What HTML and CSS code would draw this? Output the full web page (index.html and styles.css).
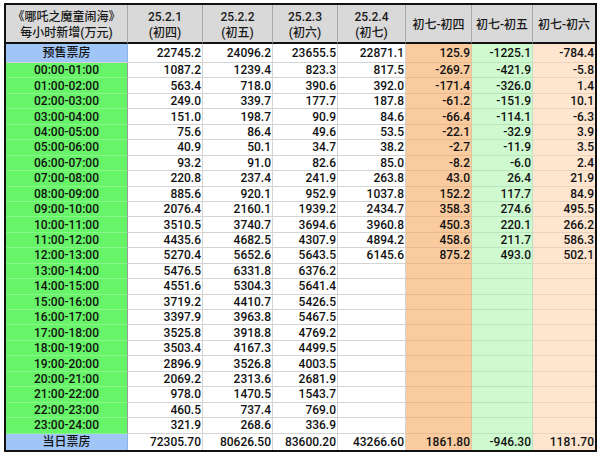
FILE: index.html
```html
<!DOCTYPE html>
<html lang="zh-CN">
<head>
<meta charset="utf-8">
<title>哪吒之魔童闹海 每小时新增</title>
<link rel="stylesheet" href="styles.css">
</head>
<body>
<div class="wrap">
<table class="sheet">
<colgroup>
<col class="c1"><col class="c2"><col class="c3"><col class="c4"><col class="c5"><col class="c6"><col class="c7"><col class="c8">
</colgroup>
<thead>
<tr class="head">
<th>《哪吒之魔童闹海》<br>每小时新增(万元)</th>
<th>25.2.1<br>(初四)</th>
<th>25.2.2<br>(初五)</th>
<th>25.2.3<br>(初六)</th>
<th>25.2.4<br>(初七)</th>
<th>初七-初四</th>
<th>初七-初五</th>
<th>初七-初六</th>
</tr>
</thead>
<tbody>
<tr class="pre"><td class="lbl blue">预售票房</td><td>22745.2</td><td>24096.2</td><td>23655.5</td><td>22871.1</td><td class="d1">125.9</td><td class="d2">-1225.1</td><td class="d3">-784.4</td></tr>
<tr class="hr"><td class="lbl green">00:00-01:00</td><td>1087.2</td><td>1239.4</td><td>823.3</td><td>817.5</td><td class="d1">-269.7</td><td class="d2">-421.9</td><td class="d3">-5.8</td></tr>
<tr class="hr"><td class="lbl green">01:00-02:00</td><td>563.4</td><td>718.0</td><td>390.6</td><td>392.0</td><td class="d1">-171.4</td><td class="d2">-326.0</td><td class="d3">1.4</td></tr>
<tr class="hr"><td class="lbl green">02:00-03:00</td><td>249.0</td><td>339.7</td><td>177.7</td><td>187.8</td><td class="d1">-61.2</td><td class="d2">-151.9</td><td class="d3">10.1</td></tr>
<tr class="hr"><td class="lbl green">03:00-04:00</td><td>151.0</td><td>198.7</td><td>90.9</td><td>84.6</td><td class="d1">-66.4</td><td class="d2">-114.1</td><td class="d3">-6.3</td></tr>
<tr class="hr"><td class="lbl green">04:00-05:00</td><td>75.6</td><td>86.4</td><td>49.6</td><td>53.5</td><td class="d1">-22.1</td><td class="d2">-32.9</td><td class="d3">3.9</td></tr>
<tr class="hr"><td class="lbl green">05:00-06:00</td><td>40.9</td><td>50.1</td><td>34.7</td><td>38.2</td><td class="d1">-2.7</td><td class="d2">-11.9</td><td class="d3">3.5</td></tr>
<tr class="hr"><td class="lbl green">06:00-07:00</td><td>93.2</td><td>91.0</td><td>82.6</td><td>85.0</td><td class="d1">-8.2</td><td class="d2">-6.0</td><td class="d3">2.4</td></tr>
<tr class="hr"><td class="lbl green">07:00-08:00</td><td>220.8</td><td>237.4</td><td>241.9</td><td>263.8</td><td class="d1">43.0</td><td class="d2">26.4</td><td class="d3">21.9</td></tr>
<tr class="hr"><td class="lbl green">08:00-09:00</td><td>885.6</td><td>920.1</td><td>952.9</td><td>1037.8</td><td class="d1">152.2</td><td class="d2">117.7</td><td class="d3">84.9</td></tr>
<tr class="hr"><td class="lbl green">09:00-10:00</td><td>2076.4</td><td>2160.1</td><td>1939.2</td><td>2434.7</td><td class="d1">358.3</td><td class="d2">274.6</td><td class="d3">495.5</td></tr>
<tr class="hr"><td class="lbl green">10:00-11:00</td><td>3510.5</td><td>3740.7</td><td>3694.6</td><td>3960.8</td><td class="d1">450.3</td><td class="d2">220.1</td><td class="d3">266.2</td></tr>
<tr class="hr"><td class="lbl green">11:00-12:00</td><td>4435.6</td><td>4682.5</td><td>4307.9</td><td>4894.2</td><td class="d1">458.6</td><td class="d2">211.7</td><td class="d3">586.3</td></tr>
<tr class="hr"><td class="lbl green">12:00-13:00</td><td>5270.4</td><td>5652.6</td><td>5643.5</td><td>6145.6</td><td class="d1">875.2</td><td class="d2">493.0</td><td class="d3">502.1</td></tr>
<tr class="hr"><td class="lbl green">13:00-14:00</td><td>5476.5</td><td>6331.8</td><td>6376.2</td><td></td><td class="d1"></td><td class="d2"></td><td class="d3"></td></tr>
<tr class="hr"><td class="lbl green">14:00-15:00</td><td>4551.6</td><td>5304.3</td><td>5641.4</td><td></td><td class="d1"></td><td class="d2"></td><td class="d3"></td></tr>
<tr class="hr"><td class="lbl green">15:00-16:00</td><td>3719.2</td><td>4410.7</td><td>5426.5</td><td></td><td class="d1"></td><td class="d2"></td><td class="d3"></td></tr>
<tr class="hr"><td class="lbl green">16:00-17:00</td><td>3397.9</td><td>3963.8</td><td>5467.5</td><td></td><td class="d1"></td><td class="d2"></td><td class="d3"></td></tr>
<tr class="hr"><td class="lbl green">17:00-18:00</td><td>3525.8</td><td>3918.8</td><td>4769.2</td><td></td><td class="d1"></td><td class="d2"></td><td class="d3"></td></tr>
<tr class="hr"><td class="lbl green">18:00-19:00</td><td>3503.4</td><td>4167.3</td><td>4499.5</td><td></td><td class="d1"></td><td class="d2"></td><td class="d3"></td></tr>
<tr class="hr"><td class="lbl green">19:00-20:00</td><td>2896.9</td><td>3526.8</td><td>4003.5</td><td></td><td class="d1"></td><td class="d2"></td><td class="d3"></td></tr>
<tr class="hr"><td class="lbl green">20:00-21:00</td><td>2069.2</td><td>2313.6</td><td>2681.9</td><td></td><td class="d1"></td><td class="d2"></td><td class="d3"></td></tr>
<tr class="hr"><td class="lbl green">21:00-22:00</td><td>978.0</td><td>1470.5</td><td>1543.7</td><td></td><td class="d1"></td><td class="d2"></td><td class="d3"></td></tr>
<tr class="hr"><td class="lbl green">22:00-23:00</td><td>460.5</td><td>737.4</td><td>769.0</td><td></td><td class="d1"></td><td class="d2"></td><td class="d3"></td></tr>
<tr class="hr"><td class="lbl green">23:00-24:00</td><td>321.9</td><td>268.6</td><td>336.9</td><td></td><td class="d1"></td><td class="d2"></td><td class="d3"></td></tr>
<tr class="total"><td class="lbl blue">当日票房</td><td>72305.70</td><td>80626.50</td><td>83600.20</td><td>43266.60</td><td class="d1">1861.80</td><td class="d2">-946.30</td><td class="d3">1181.70</td></tr>
</tbody>
</table>
</div>
</body>
</html>
```
FILE: styles.css
```css
html, body {
  margin: 0;
  padding: 0;
  background: #ffffff;
}
.wrap {
  padding: 3px 0 0 4px;
}
.sheet {
  border-collapse: separate;
  border-spacing: 0;
  border: 2px solid #111111;
  table-layout: fixed;
  width: 593px;
  font-family: "Roboto", "Noto Sans CJK SC", sans-serif;
  font-size: 12px;
  font-weight: 500;
  color: #111111;
}
.c1 { width: 122px; }
.c2 { width: 75px; }
.c3 { width: 70px; }
.c4 { width: 65px; }
.c5 { width: 68px; }
.c6 { width: 66px; }
.c7 { width: 61px; }
.c8 { width: 62px; }

.sheet th,
.sheet td {
  box-sizing: border-box;
  padding: 0 1px 0 0;
  border-right: 1px solid #d4d4d4;
  border-bottom: 1px solid #d4d4d4;
  text-align: right;
  vertical-align: middle;
  white-space: nowrap;
  overflow: hidden;
  line-height: 14px;
}
.sheet th:last-child,
.sheet td:last-child {
  border-right: none;
}
.head th {
  height: 39px;
  background: #d9d9d9;
  font-weight: 500;
  text-align: center;
  line-height: 16px;
  color: #1a1a1a;
  border-right: 1px solid #a9a9a9;
  border-bottom: 2px solid #111111;
  padding: 2px 0 0 0;
}
.pre td { height: 19px; }
.hr td { height: 15.45px; }
.total td {
  height: 16.2px;
  border-bottom: none;
}
.sheet td.lbl {
  text-align: center;
  padding: 0;
}
.sheet td.blue {
  background: #a0c6f8;
  border-right-color: #8fb3e4;
}
.sheet td.green {
  background: #68f468;
  border-bottom-color: #8af58a;
  border-right-color: #9a9a9a;
}
.sheet td.d1 {
  background: #f9cb9e;
  border-bottom-color: #e6bb92;
  border-right-color: #e3c2a0;
}
.sheet td.d2 {
  background: #cff9cf;
  border-bottom-color: #bde5bd;
  border-right-color: #c3dfc3;
}
.sheet td.d3 {
  background: #fde5cf;
  border-bottom-color: #e8d3bf;
}
```
